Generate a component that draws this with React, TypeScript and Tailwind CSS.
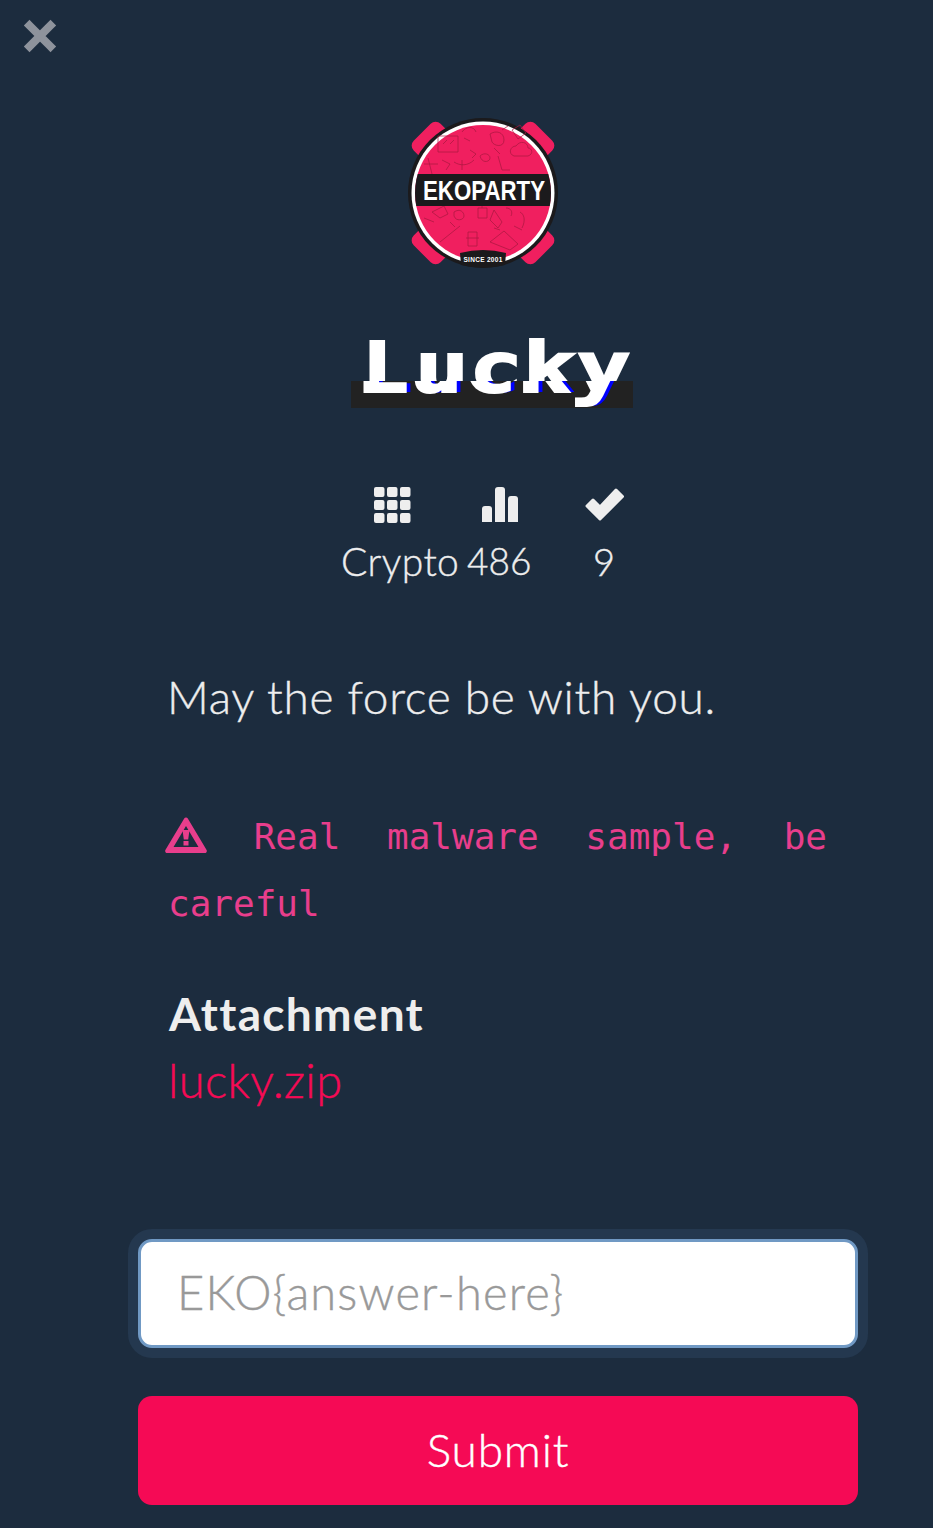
const sans = "font-['Lato','Noto_Sans',sans-serif]";
const thin = "[-webkit-text-stroke:0.4px_currentColor]";

function CloseIcon() {
  return (
    <svg width="34" height="34" viewBox="0 0 34 34" className="block">
      <path d="M6.500 6.500 L27.500 27.500 M27.500 6.500 L6.500 27.500" stroke="#8e939c" strokeWidth="8" strokeLinecap="square" fill="none" />
    </svg>
  );
}

function Logo() {
  const doodles = [
    "M48 36h20v16H48z M53 44l4-4 M60 44l4-4",
    "M72 32c4-6 12-6 14 0 M74 38l6 3",
    "M100 34c6-4 14-2 14 6s-10 6-12 2z M104 48l6 6",
    "M122 30l8-5 6 8-8 6z M112 30l6-4",
    "M126 46c4-6 12-4 12 2 4 0 6 6 0 8h-14c-6-2-4-10 2-10z",
    "M38 58l4 16 M34 64h14 M52 60l8 4-4 6",
    "M64 62c6 4 14 4 20-2 M72 60v10 M80 50l6 4-4 4",
    "M108 56l4 14 8 0 M90 56c4-4 10-2 10 2s-8 6-10-2z",
    "M42 112l8 6 8-4-4-8z M34 118l10 4",
    "M64 112c6-4 10 0 10 4s-8 6-10 0z M60 122l5 5",
    "M88 108v10h9v-10z M92 103v5",
    "M104 110l8 12-4 6-8-8z M116 108c5 0 7 4 5 8",
    "M130 112c4 2 6 8 2 16 M124 126l8 4",
    "M50 142l20-16",
    "M78 132h9v14h-9z M76 138h13",
    "M100 142l14-11 14 13-8 6z M104 128l6 2",
  ];
  return (
    <svg width="190" height="180" viewBox="0 0 190 180" className="block">
      <defs>
        <clipPath id="inner">
          <circle cx="93" cy="93" r="68" />
        </clipPath>
      </defs>
      {[45, 135, 225, 315].map((a) => (
        <rect key={a} x="74" y="7" width="38" height="32" rx="7" fill="#f01f5f" transform={`rotate(${a} 93 93)`} />
      ))}
      <circle cx="93" cy="93" r="75" fill="#1b1a1c" />
      <circle cx="93" cy="93" r="71.500" fill="#ffffff" />
      <circle cx="93" cy="93" r="68" fill="#f01f5f" />
      {doodles.map((d, i) => (
        <path key={i} d={d} fill="none" stroke="#a8173f" strokeWidth="1" opacity="0.7" />
      ))}
      <rect x="20" y="74" width="146" height="32" fill="#1b1a1c" clipPath="url(#inner)" />
      <text x="33" y="100" fontFamily="'Liberation Sans', sans-serif" fontWeight="700" fontSize="28" fill="#ffffff" textLength="122" lengthAdjust="spacingAndGlyphs">
        EKOPARTY
      </text>
      <path d="M70 153 Q93 147 116 153 L115 165 Q93 170 71 165 Z" fill="#1b1a1c" />
      <text x="93" y="162" textAnchor="middle" fontFamily="'Liberation Sans', sans-serif" fontWeight="700" fontSize="6.500" letterSpacing="0.3" fill="#ffffff">
        SINCE 2001
      </text>
    </svg>
  );
}

function Title() {
  const letters = "font-['DejaVu_Sans_Mono',monospace] font-bold text-[70px] leading-[80px] text-white [-webkit-text-stroke:2px_white] whitespace-pre origin-left scale-x-[1.28]";
  return (
    <h1 className="relative mt-[48px] ml-[351px] w-[282px] h-[80px]">
      <span className="absolute left-0 right-0 top-[53px] h-[27px] bg-[#222222]" />
      <span className={`absolute left-[10px] top-0 ${letters} [clip-path:inset(0_-20px_27px_-20px)]`}>Lucky</span>
      <span aria-hidden="true" className={`absolute left-[4px] top-0 ${letters} [text-shadow:4px_0_#0000ff] [clip-path:inset(53px_-20px_0_-20px)]`}>Lucky</span>
    </h1>
  );
}

function GridIcon() {
  const cells = [0, 13, 26];
  return (
    <svg width="37" height="36" viewBox="0 0 37 36" className="block">
      {cells.flatMap((y) =>
        cells.map((x) => <rect key={`${x}-${y}`} x={x} y={y} width="10.500" height="10" rx="2" fill="#eeeeee" />)
      )}
    </svg>
  );
}

function BarsIcon() {
  return (
    <svg width="36" height="36" viewBox="0 0 36 36" className="block">
      <path d="M0 35V22a3 3 0 0 1 3-3h4a3 3 0 0 1 3 3v13z" fill="#eeeeee" />
      <path d="M13 35V3a3 3 0 0 1 3-3h4a3 3 0 0 1 3 3v32z" fill="#eeeeee" />
      <path d="M26 35V12a3 3 0 0 1 3-3h4a3 3 0 0 1 3 3v23z" fill="#eeeeee" />
    </svg>
  );
}

function CheckIcon() {
  return (
    <svg width="40" height="36" viewBox="0 0 40 36" className="block">
      <path d="M2 19 L8 13 L15 20 L31 3 L37.500 9.500 L15 32 Z" fill="#eeeeee" stroke="#eeeeee" strokeWidth="3" strokeLinejoin="round" />
    </svg>
  );
}

function WarnIcon() {
  return (
    <svg width="42" height="36" viewBox="0 0 42 36" className="inline-block align-[-4px] -ml-[3px]">
      <path fillRule="evenodd" d="M21 0.500c.8 0 1.400.4 1.800 1L41.600 33c.7 1.300-.2 3-1.800 3H2.200C.6 36-.3 34.300.4 33L19.200 1.500c.4-.6 1-1 1.800-1zM21 9L8.500 30h25z" fill="#e83e8c" />
      <path d="M17.500 13h7l-1.300 9.500h-4.400z M18.500 24h5v4.500h-5z" fill="#e83e8c" />
    </svg>
  );
}

export default function App() {
  return (
    <div className={`min-h-[1528px] bg-[#1c2c3e] ${sans} overflow-hidden`}>
      <div className="pt-[19px] pl-[23px] h-[117px]">
        <CloseIcon />
      </div>

      <div className="ml-[390px] w-[190px] h-[180px] -mt-[17px]">
        <Logo />
      </div>

      <Title />

      <div className="mt-[79px] ml-[341px] grid grid-cols-[126px_82px_auto] justify-start text-[#eeeeee]">
        <div className="flex justify-start pl-[33px]"><GridIcon /></div>
        <div className="flex justify-start pl-[15px]"><BarsIcon /></div>
        <div className="flex justify-start pl-[36px]"><CheckIcon /></div>
        <div className={`text-[39px] leading-[46px] font-light mt-[15px] tracking-[0.4px] ${thin}`}>Crypto</div>
        <div className={`text-[37px] leading-[46px] font-light mt-[15px] ${thin}`}>486</div>
        <div className={`text-[38px] leading-[46px] font-light mt-[15px] pl-[44px] ${thin}`}>9</div>
      </div>

      <div className="ml-[138px] w-[720px]">
        <div className="px-[31px]">
          <p className={`mt-[85px] -ml-[2px] text-[46px] leading-[56px] font-light text-[#eeeeee] whitespace-nowrap tracking-[0.7px] ${thin}`}>May the force be with you.</p>

          <p className="mt-[78px] -ml-[1px] text-justify font-['DejaVu_Sans_Mono',monospace] text-[36px] leading-[67px] text-[#e83e8c]">
            <WarnIcon /> Real malware sample, be careful
          </p>

          <h4 className="mt-[50px] text-[46px] leading-[54px] font-bold text-[#eeeeee] tracking-[1.300px]">Attachment</h4>
          <a className={`block mt-[11px] -ml-[1px] text-[47px] leading-[56px] font-light text-[#f50a55] tracking-[0.4px] ${thin}`}>lucky.zip</a>
        </div>

        <div className={`mt-[131px] rounded-[14px] h-[109px] bg-white border-[3px] border-[#7099c4] shadow-[0_0_0_10px_#24384f] flex items-center pl-[36px] pb-[2px] text-[47px] font-light text-[#999999] tracking-[1.200px] ${thin}`}>
          EKO{"{"}answer-here{"}"}
        </div>

        <button className={`mt-[48px] w-full h-[109px] rounded-[14px] bg-[#f50a55] text-white text-[46px] font-light tracking-[0.8px] pb-[3px] ${thin}`}>Submit</button>
      </div>
    </div>
  );
}
